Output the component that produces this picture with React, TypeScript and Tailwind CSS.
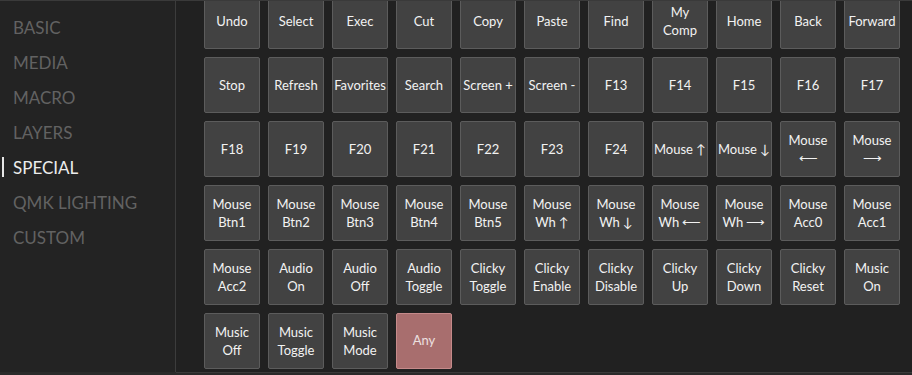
import React from 'react';

const menu = ['BASIC', 'MEDIA', 'MACRO', 'LAYERS', 'SPECIAL', 'QMK LIGHTING', 'CUSTOM'];

const keys: string[][] = [
  ['Undo'], ['Select'], ['Exec'], ['Cut'], ['Copy'], ['Paste'], ['Find'], ['My', 'Comp'], ['Home'], ['Back'], ['Forward'],
  ['Stop'], ['Refresh'], ['Favorites'], ['Search'], ['Screen +'], ['Screen -'], ['F13'], ['F14'], ['F15'], ['F16'], ['F17'],
  ['F18'], ['F19'], ['F20'], ['F21'], ['F22'], ['F23'], ['F24'], ['Mouse ↑'], ['Mouse ↓'], ['Mouse', '⟵'], ['Mouse', '⟶'],
  ['Mouse', 'Btn1'], ['Mouse', 'Btn2'], ['Mouse', 'Btn3'], ['Mouse', 'Btn4'], ['Mouse', 'Btn5'], ['Mouse', 'Wh ↑'], ['Mouse', 'Wh ↓'], ['Mouse', 'Wh ⟵'], ['Mouse', 'Wh ⟶'], ['Mouse', 'Acc0'], ['Mouse', 'Acc1'],
  ['Mouse', 'Acc2'], ['Audio', 'On'], ['Audio', 'Off'], ['Audio', 'Toggle'], ['Clicky', 'Toggle'], ['Clicky', 'Enable'], ['Clicky', 'Disable'], ['Clicky', 'Up'], ['Clicky', 'Down'], ['Clicky', 'Reset'], ['Music', 'On'],
  ['Music', 'Off'], ['Music', 'Toggle'], ['Music', 'Mode'],
];

const Key = ({ lines }: { lines: string[] }) => (
  <div className="w-[56px] h-[56px] flex flex-col items-center justify-center rounded-[2px] border border-[#5c5c5c] bg-[#424242] text-[13px] leading-[18px] text-[#f2f2f2] text-center whitespace-nowrap">
    {lines.map((l, i) => (
      <span key={i}>{l}</span>
    ))}
  </div>
);

const App = () => {
  return (
    <div
      className="w-[912px] h-[375px] overflow-hidden bg-[#2a2a2a] border-t border-[#3a3a3a] flex"
      style={{ fontFamily: 'Lato, "Liberation Sans", sans-serif' }}
    >
      <aside className="w-[176px] h-[371px] shrink-0 bg-[#232323] border-r border-[#3c3c3c] pt-[9px]">
        {menu.map((m) => (
          <div key={m} className="relative h-[35px] flex items-center pl-[13px] text-[17px]">
            {m === 'SPECIAL' && <span className="absolute left-[2px] top-[7px] w-[2px] h-[20px] bg-[#e6e6e6]" />}
            <span className={m === 'SPECIAL' ? 'text-[#ececec]' : 'text-[#626262]'}>{m}</span>
          </div>
        ))}
      </aside>
      <main className="flex-1 h-[372px] bg-[#212121] border-b border-[#3a3a3a] overflow-hidden pl-[28px]">
        <div className="-mt-[8px] grid grid-cols-[repeat(11,56px)] gap-2">
          {keys.map((k, i) => (
            <Key key={i} lines={k} />
          ))}
          <div className="w-[56px] h-[56px] flex items-center justify-center rounded-[2px] border border-[#c58a8a] bg-[#a86e6e] text-[13px] text-[#ece0e0]">
            Any
          </div>
        </div>
      </main>
    </div>
  );
};

export default App;
